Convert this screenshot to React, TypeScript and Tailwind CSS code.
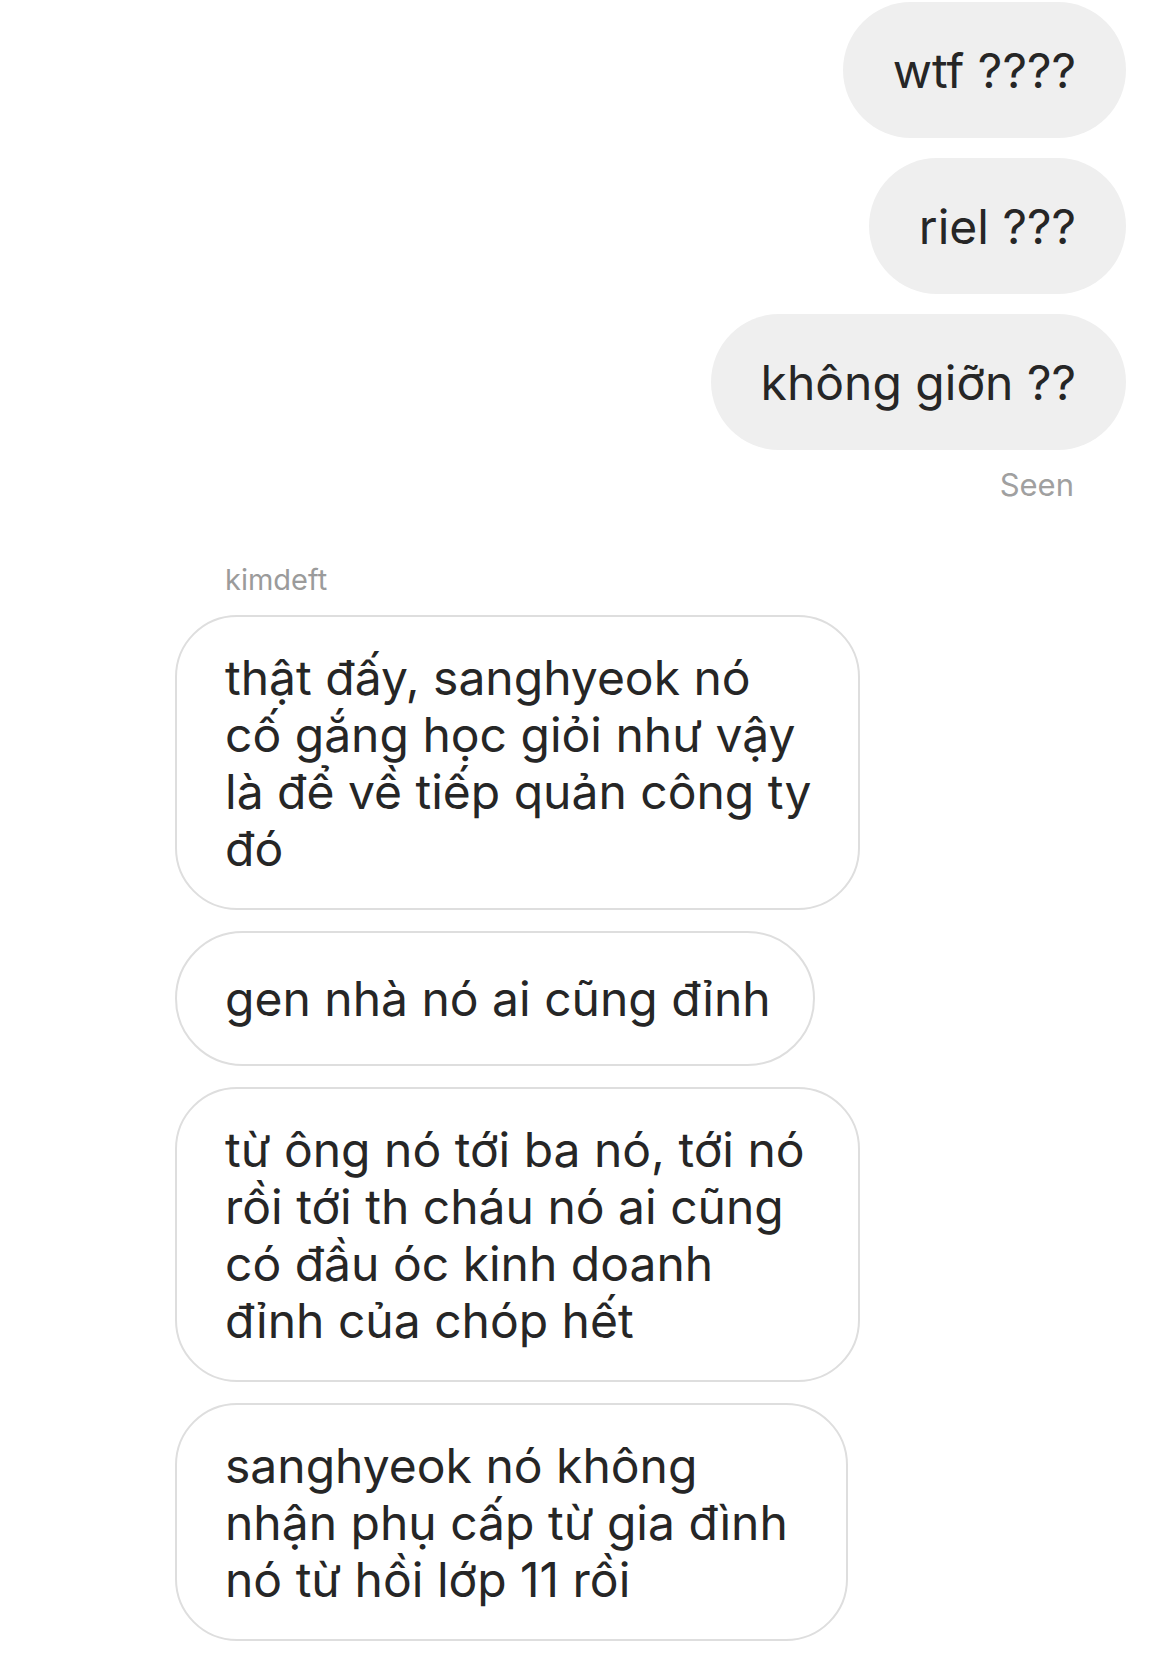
const sent = ['wtf ????', 'riel ???', 'không giỡn ??'];

const received: { w: string; lines: string[] }[] = [
  { w: 'w-[685px]', lines: ['thật đấy, sanghyeok nó', 'cố gắng học giỏi như vậy', 'là để về tiếp quản công ty', 'đó'] },
  { w: 'w-[640px]', lines: ['gen nhà nó ai cũng đỉnh'] },
  { w: 'w-[685px]', lines: ['từ ông nó tới ba nó, tới nó', 'rồi tới th cháu nó ai cũng', 'có đầu óc kinh doanh', 'đỉnh của chóp hết'] },
  { w: 'w-[673px]', lines: ['sanghyeok nó không', 'nhận phụ cấp từ gia đình', 'nó từ hồi lớp 11 rồi'] },
];

function SentBubble({ text }: { text: string }) {
  return (
    <div className="flex min-h-[136px] items-center rounded-full bg-[#efefef] px-[50px] text-[48px] leading-[57px] text-[#262626]">
      {text}
    </div>
  );
}

function ReceivedBubble({ w, lines }: { w: string; lines: string[] }) {
  const single = lines.length === 1;
  return (
    <div
      className={`${w} flex min-h-[135px] flex-col justify-center border-2 border-[#dedede] bg-white py-[31.5px] pl-[48px] text-[48px] leading-[57px] text-[#262626] ${
        single ? 'rounded-full' : 'rounded-[62px]'
      }`}
    >
      {lines.map((l) => (
        <span key={l} className="block whitespace-nowrap">
          {l}
        </span>
      ))}
    </div>
  );
}

export default function App() {
  return (
    <div
      className="h-[1655px] w-[1170px] overflow-hidden bg-white"
      style={{ fontFamily: 'Inter, "Noto Sans", sans-serif' }}
    >
      {/* outgoing */}
      <div className="flex flex-col items-end gap-[20px] pr-[44px] pt-[2px]">
        {sent.map((t) => (
          <SentBubble key={t} text={t} />
        ))}
      </div>
      <p className="mt-[15px] pr-[96px] text-right text-[31px] leading-[40px] text-[#a0a0a0]">Seen</p>

      {/* incoming */}
      <div className="mt-[57px] pl-[225px] text-[29px] leading-[36px] text-[#9b9b9b]">kimdeft</div>
      <div className="mt-[17px] flex flex-col items-start gap-[21px] pl-[175px]">
        {received.map((b, i) => (
          <ReceivedBubble key={i} w={b.w} lines={b.lines} />
        ))}
      </div>
    </div>
  );
}
